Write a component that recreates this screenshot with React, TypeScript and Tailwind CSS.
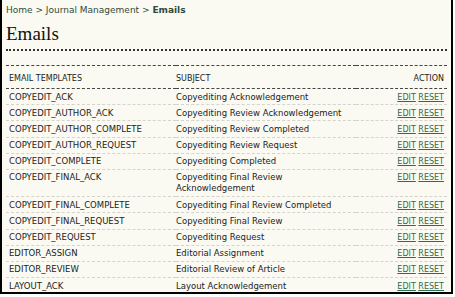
const rows: [string, string][] = [
  ['COPYEDIT_ACK', 'Copyediting Acknowledgement'],
  ['COPYEDIT_AUTHOR_ACK', 'Copyediting Review Acknowledgement'],
  ['COPYEDIT_AUTHOR_COMPLETE', 'Copyediting Review Completed'],
  ['COPYEDIT_AUTHOR_REQUEST', 'Copyediting Review Request'],
  ['COPYEDIT_COMPLETE', 'Copyediting Completed'],
  ['COPYEDIT_FINAL_ACK', 'Copyediting Final Review Acknowledgement'],
  ['COPYEDIT_FINAL_COMPLETE', 'Copyediting Final Review Completed'],
  ['COPYEDIT_FINAL_REQUEST', 'Copyediting Final Review'],
  ['COPYEDIT_REQUEST', 'Copyediting Request'],
  ['EDITOR_ASSIGN', 'Editorial Assignment'],
  ['EDITOR_REVIEW', 'Editorial Review of Article'],
  ['LAYOUT_ACK', 'Layout Acknowledgement'],
]

export default function App() {
  return (
    <div className="w-[455px] h-[297px] bg-white overflow-hidden">
      <div
        className="w-[453px] h-[294px] overflow-hidden bg-[#fafaf2] border-l-2 border-r-2 border-b-2 border-black px-[4px] text-[#222]"
        style={{ fontFamily: "'DejaVu Sans', Verdana, sans-serif" }}
      >
        <div className="pt-[5px] text-[9px] leading-[11px] text-[#2f4a3c]">
          Home &gt; Journal Management &gt; <span className="font-bold">Emails</span>
        </div>
        <h1
          className="mt-[7px] text-[19px] leading-[22px] text-[#111]"
          style={{ fontFamily: "'Liberation Serif', Georgia, serif" }}
        >
          Emails
        </h1>
        <div className="mt-[4px] border-b-2 border-dotted border-[#333]" />
        <table className="mt-[14px] w-full table-fixed border-collapse text-[8.5px] leading-[11px]">
          <colgroup>
            <col className="w-[170px]" />
            <col className="w-[180px]" />
            <col />
          </colgroup>
          <thead>
            <tr className="border-t border-b border-dashed border-[#444]">
              <th className="pl-[3px] pt-[7px] pb-[4px] text-left font-normal text-[8px]">EMAIL TEMPLATES</th>
              <th className="pt-[7px] pb-[4px] text-left font-normal text-[8px]">SUBJECT</th>
              <th className="pr-[3px] pt-[7px] pb-[4px] text-right font-normal text-[8px]">ACTION</th>
            </tr>
          </thead>
          <tbody>
            {rows.map(([key, subject], i) => (
              <tr key={key} className={i < rows.length - 1 ? 'border-b border-dashed border-[#d4d4cc]' : ''}>
                <td className="pl-[3px] pt-[2.5px] pb-[1.7px] align-top">{key}</td>
                <td className="pt-[2.5px] pb-[1.7px] align-top">{subject}</td>
                <td className="pr-[3px] pt-[2.5px] pb-[1.7px] align-top text-right whitespace-nowrap text-[8px] text-[#2f6b4f]">
                  <a className="underline" href="#">EDIT</a> <a className="underline" href="#">RESET</a>
                </td>
              </tr>
            ))}
          </tbody>
        </table>
      </div>
    </div>
  )
}
